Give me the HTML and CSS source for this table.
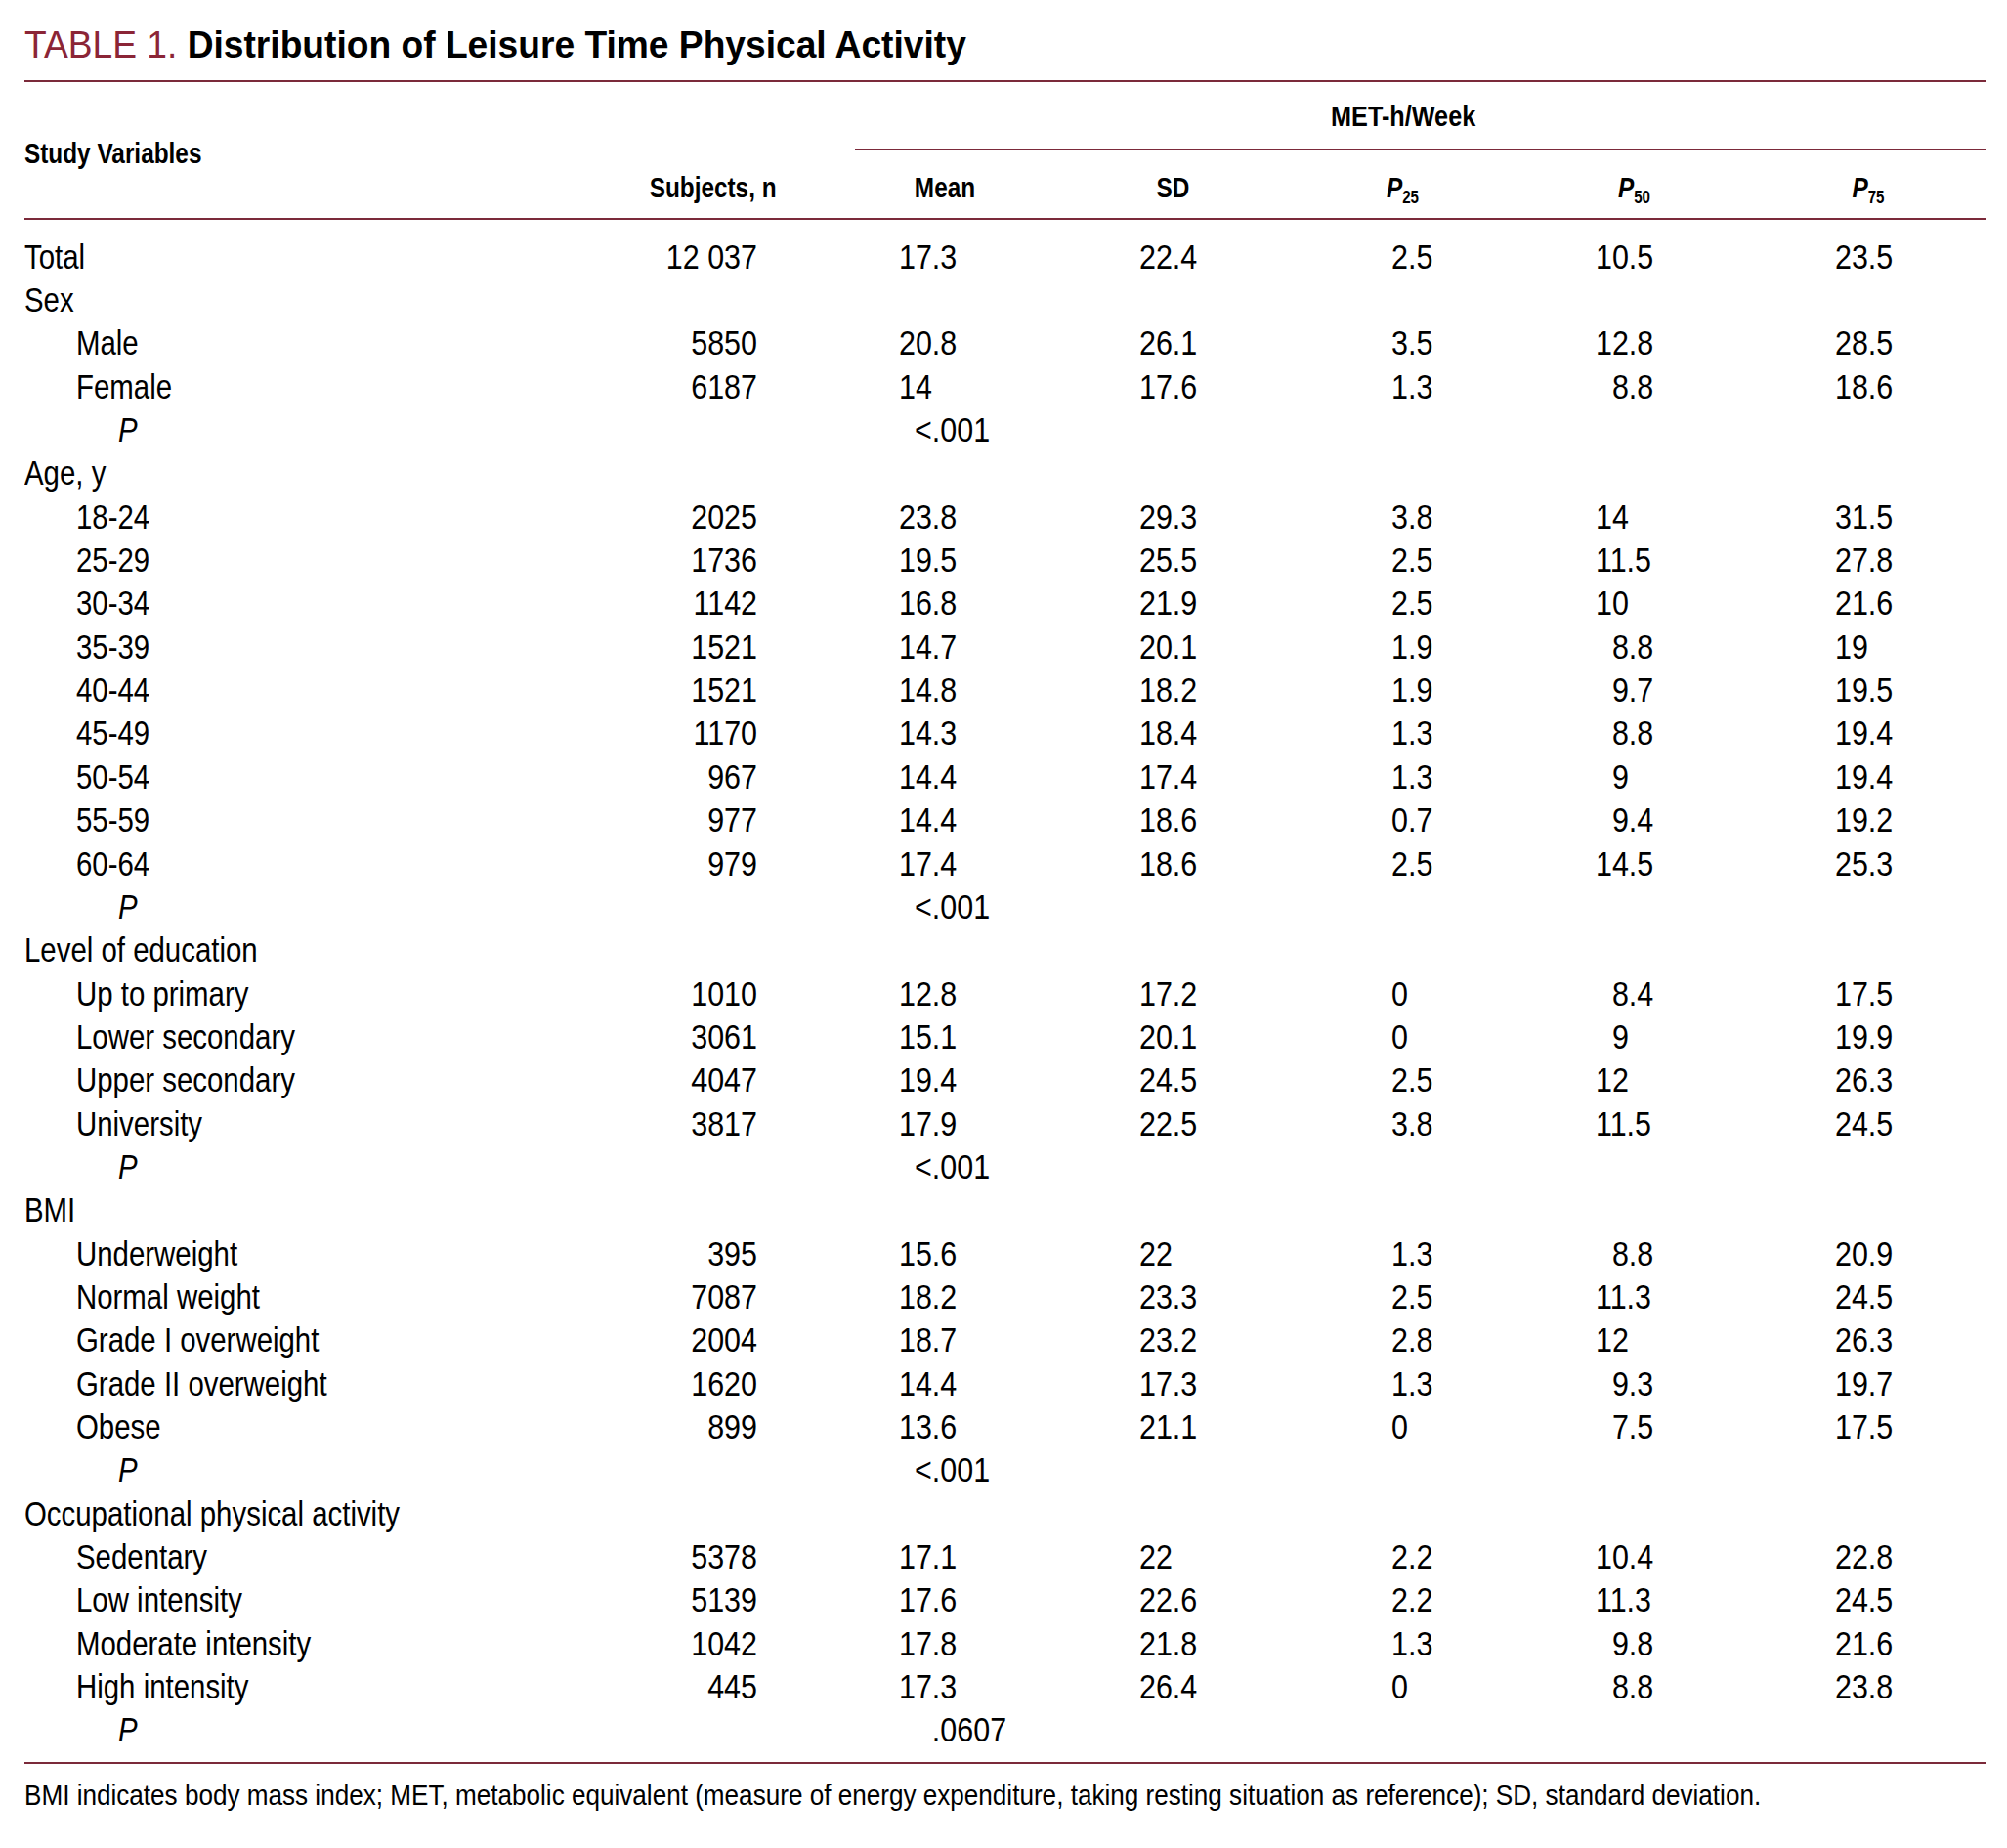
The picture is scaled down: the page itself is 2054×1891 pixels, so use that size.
FILE: index.html
```html
<!DOCTYPE html>
<html lang="en">
<head>
<meta charset="utf-8">
<title>Table 1. Distribution of Leisure Time Physical Activity</title>
<link rel="stylesheet" href="styles.css">
</head>
<body>
<div class="page">
  <h1 class="title"><span class="title-t"><span class="tag">TABLE 1.</span> Distribution of Leisure Time Physical Activity</span></h1>
  <div class="thead">
    <div class="h-study">Study Variables</div>
    <div class="h-met"><span class="met-t">MET-h/Week</span></div>
    <div class="h-col h-subj">Subjects, n</div>
    <div class="h-col">Mean</div>
    <div class="h-col">SD</div>
    <div class="h-col"><span class="pi">P</span><sub>25</sub></div>
    <div class="h-col"><span class="pi">P</span><sub>50</sub></div>
    <div class="h-col"><span class="pi">P</span><sub>75</sub></div>
  </div>
  <div class="tbody">
    <div class="row"><div class="lab">Total</div><div class="c-subj">12 037</div><div class="c-mean">17.3</div><div class="c-sd">22.4</div><div class="c-p25">2.5</div><div class="c-p50">10.5</div><div class="c-p75">23.5</div></div>
    <div class="row"><div class="lab">Sex</div></div>
    <div class="row"><div class="lab sub">Male</div><div class="c-subj">5850</div><div class="c-mean">20.8</div><div class="c-sd">26.1</div><div class="c-p25">3.5</div><div class="c-p50">12.8</div><div class="c-p75">28.5</div></div>
    <div class="row"><div class="lab sub">Female</div><div class="c-subj">6187</div><div class="c-mean">14</div><div class="c-sd">17.6</div><div class="c-p25">1.3</div><div class="c-p50 one">8.8</div><div class="c-p75">18.6</div></div>
    <div class="row"><div class="lab pv">P</div><div class="c-subj"></div><div class="c-mean"><span class="int">&lt;</span>.001</div></div>
    <div class="row"><div class="lab">Age, y</div></div>
    <div class="row"><div class="lab sub">18-24</div><div class="c-subj">2025</div><div class="c-mean">23.8</div><div class="c-sd">29.3</div><div class="c-p25">3.8</div><div class="c-p50">14</div><div class="c-p75">31.5</div></div>
    <div class="row"><div class="lab sub">25-29</div><div class="c-subj">1736</div><div class="c-mean">19.5</div><div class="c-sd">25.5</div><div class="c-p25">2.5</div><div class="c-p50">11.5</div><div class="c-p75">27.8</div></div>
    <div class="row"><div class="lab sub">30-34</div><div class="c-subj">1142</div><div class="c-mean">16.8</div><div class="c-sd">21.9</div><div class="c-p25">2.5</div><div class="c-p50">10</div><div class="c-p75">21.6</div></div>
    <div class="row"><div class="lab sub">35-39</div><div class="c-subj">1521</div><div class="c-mean">14.7</div><div class="c-sd">20.1</div><div class="c-p25">1.9</div><div class="c-p50 one">8.8</div><div class="c-p75">19</div></div>
    <div class="row"><div class="lab sub">40-44</div><div class="c-subj">1521</div><div class="c-mean">14.8</div><div class="c-sd">18.2</div><div class="c-p25">1.9</div><div class="c-p50 one">9.7</div><div class="c-p75">19.5</div></div>
    <div class="row"><div class="lab sub">45-49</div><div class="c-subj">1170</div><div class="c-mean">14.3</div><div class="c-sd">18.4</div><div class="c-p25">1.3</div><div class="c-p50 one">8.8</div><div class="c-p75">19.4</div></div>
    <div class="row"><div class="lab sub">50-54</div><div class="c-subj">967</div><div class="c-mean">14.4</div><div class="c-sd">17.4</div><div class="c-p25">1.3</div><div class="c-p50 one">9</div><div class="c-p75">19.4</div></div>
    <div class="row"><div class="lab sub">55-59</div><div class="c-subj">977</div><div class="c-mean">14.4</div><div class="c-sd">18.6</div><div class="c-p25">0.7</div><div class="c-p50 one">9.4</div><div class="c-p75">19.2</div></div>
    <div class="row"><div class="lab sub">60-64</div><div class="c-subj">979</div><div class="c-mean">17.4</div><div class="c-sd">18.6</div><div class="c-p25">2.5</div><div class="c-p50">14.5</div><div class="c-p75">25.3</div></div>
    <div class="row"><div class="lab pv">P</div><div class="c-subj"></div><div class="c-mean"><span class="int">&lt;</span>.001</div></div>
    <div class="row"><div class="lab">Level of education</div></div>
    <div class="row"><div class="lab sub">Up to primary</div><div class="c-subj">1010</div><div class="c-mean">12.8</div><div class="c-sd">17.2</div><div class="c-p25">0</div><div class="c-p50 one">8.4</div><div class="c-p75">17.5</div></div>
    <div class="row"><div class="lab sub">Lower secondary</div><div class="c-subj">3061</div><div class="c-mean">15.1</div><div class="c-sd">20.1</div><div class="c-p25">0</div><div class="c-p50 one">9</div><div class="c-p75">19.9</div></div>
    <div class="row"><div class="lab sub">Upper secondary</div><div class="c-subj">4047</div><div class="c-mean">19.4</div><div class="c-sd">24.5</div><div class="c-p25">2.5</div><div class="c-p50">12</div><div class="c-p75">26.3</div></div>
    <div class="row"><div class="lab sub">University</div><div class="c-subj">3817</div><div class="c-mean">17.9</div><div class="c-sd">22.5</div><div class="c-p25">3.8</div><div class="c-p50">11.5</div><div class="c-p75">24.5</div></div>
    <div class="row"><div class="lab pv">P</div><div class="c-subj"></div><div class="c-mean"><span class="int">&lt;</span>.001</div></div>
    <div class="row"><div class="lab">BMI</div></div>
    <div class="row"><div class="lab sub">Underweight</div><div class="c-subj">395</div><div class="c-mean">15.6</div><div class="c-sd">22</div><div class="c-p25">1.3</div><div class="c-p50 one">8.8</div><div class="c-p75">20.9</div></div>
    <div class="row"><div class="lab sub">Normal weight</div><div class="c-subj">7087</div><div class="c-mean">18.2</div><div class="c-sd">23.3</div><div class="c-p25">2.5</div><div class="c-p50">11.3</div><div class="c-p75">24.5</div></div>
    <div class="row"><div class="lab sub">Grade I overweight</div><div class="c-subj">2004</div><div class="c-mean">18.7</div><div class="c-sd">23.2</div><div class="c-p25">2.8</div><div class="c-p50">12</div><div class="c-p75">26.3</div></div>
    <div class="row"><div class="lab sub">Grade II overweight</div><div class="c-subj">1620</div><div class="c-mean">14.4</div><div class="c-sd">17.3</div><div class="c-p25">1.3</div><div class="c-p50 one">9.3</div><div class="c-p75">19.7</div></div>
    <div class="row"><div class="lab sub">Obese</div><div class="c-subj">899</div><div class="c-mean">13.6</div><div class="c-sd">21.1</div><div class="c-p25">0</div><div class="c-p50 one">7.5</div><div class="c-p75">17.5</div></div>
    <div class="row"><div class="lab pv">P</div><div class="c-subj"></div><div class="c-mean"><span class="int">&lt;</span>.001</div></div>
    <div class="row"><div class="lab">Occupational physical activity</div></div>
    <div class="row"><div class="lab sub">Sedentary</div><div class="c-subj">5378</div><div class="c-mean">17.1</div><div class="c-sd">22</div><div class="c-p25">2.2</div><div class="c-p50">10.4</div><div class="c-p75">22.8</div></div>
    <div class="row"><div class="lab sub">Low intensity</div><div class="c-subj">5139</div><div class="c-mean">17.6</div><div class="c-sd">22.6</div><div class="c-p25">2.2</div><div class="c-p50">11.3</div><div class="c-p75">24.5</div></div>
    <div class="row"><div class="lab sub">Moderate intensity</div><div class="c-subj">1042</div><div class="c-mean">17.8</div><div class="c-sd">21.8</div><div class="c-p25">1.3</div><div class="c-p50 one">9.8</div><div class="c-p75">21.6</div></div>
    <div class="row"><div class="lab sub">High intensity</div><div class="c-subj">445</div><div class="c-mean">17.3</div><div class="c-sd">26.4</div><div class="c-p25">0</div><div class="c-p50 one">8.8</div><div class="c-p75">23.8</div></div>
    <div class="row"><div class="lab pv">P</div><div class="c-subj"></div><div class="c-mean"><span class="int"></span>.0607</div></div>
  </div>
  <p class="foot">BMI indicates body mass index; MET, metabolic equivalent (measure of energy expenditure, taking resting situation as reference); SD, standard deviation.</p>
</div>
</body>
</html>
```

FILE: styles.css
```css
* {
  box-sizing: border-box;
  margin: 0;
  padding: 0;
}

body {
  background: #ffffff;
  color: #000000;
  font-family: "Liberation Sans", Arial, Helvetica, sans-serif;
}

.page {
  --cols: 615px 211px 232px 235px 235px 239px 240px;
  --rule: #7b2a3a;
  --narrow-text: scaleX(0.84);
  --narrow-num: scaleX(0.87);
  width: 2007px;
  margin-left: 25px;
}

/* ---------- title ---------- */
.title {
  font-size: 39px;
  line-height: 44px;
  font-weight: bold;
  margin-top: 24px;
  padding-bottom: 14px;
  border-bottom: 2px solid var(--rule);
  white-space: nowrap;
}

.title-t {
  display: inline-block;
  transform: scaleX(0.953);
  transform-origin: 0 50%;
}

.title .tag {
  font-weight: normal;
  color: #8b2536;
}

/* ---------- header ---------- */
.thead {
  display: grid;
  grid-template-columns: var(--cols);
  grid-template-rows: auto auto;
  font-weight: bold;
  font-size: 29px;
  line-height: 32px;
  padding-bottom: 15px;
  border-bottom: 2px solid var(--rule);
  white-space: nowrap;
}

.h-study {
  grid-column: 1;
  grid-row: 1 / 3;
  align-self: start;
  margin-top: 57px;
  transform: var(--narrow-text);
  transform-origin: 0 50%;
}

.h-met {
  grid-column: 3 / 8;
  grid-row: 1;
  margin-left: 24px;
  padding: 19px 34px 17px 0;
  text-align: center;
  border-bottom: 2px solid var(--rule);
}

.met-t {
  display: inline-block;
  transform: scaleX(0.87);
  transform-origin: 50% 50%;
}

.h-col {
  grid-row: 2;
  margin-top: 22px;
  text-align: center;
  transform: var(--narrow-text);
  transform-origin: 50% 50%;
}

.h-col.h-subj {
  text-align: right;
  margin-right: 57px;
  transform-origin: 100% 50%;
}

.pi {
  font-style: italic;
}

.h-col sub {
  font-size: 18px;
  line-height: 0;
  vertical-align: -6px;
}

/* ---------- body ---------- */
.tbody {
  padding-top: 15.7px;
  padding-bottom: 10px;
  border-bottom: 2px solid var(--rule);
}

.row {
  display: grid;
  grid-template-columns: var(--cols);
  height: 44.35px;
  font-size: 35px;
  line-height: 44.35px;
  white-space: nowrap;
}

.lab {
  grid-column: 1;
  transform: var(--narrow-text);
  transform-origin: 0 50%;
}

.lab.sub {
  margin-left: 53px;
}

.lab.pv {
  margin-left: 96px;
  font-style: italic;
}

.c-subj {
  text-align: right;
  margin-right: 76px;
  transform: var(--narrow-num);
  transform-origin: 100% 50%;
}

.c-mean,
.c-sd,
.c-p25,
.c-p50,
.c-p75 {
  transform: var(--narrow-num);
  transform-origin: 0 50%;
}

.c-mean {
  margin-left: 69px;
}

.c-sd {
  margin-left: 83px;
}

.c-p25 {
  margin-left: 106px;
}

.c-p50 {
  margin-left: 80px;
}

.c-p50.one {
  padding-left: 1ch;
}

.c-p75 {
  margin-left: 86px;
}

.int {
  display: inline-block;
  width: 2ch;
  text-align: right;
}

/* ---------- footnote ---------- */
.foot {
  font-size: 30px;
  line-height: 34px;
  margin-top: 15.6px;
  white-space: nowrap;
  transform: scaleX(0.87);
  transform-origin: 0 50%;
}
```
